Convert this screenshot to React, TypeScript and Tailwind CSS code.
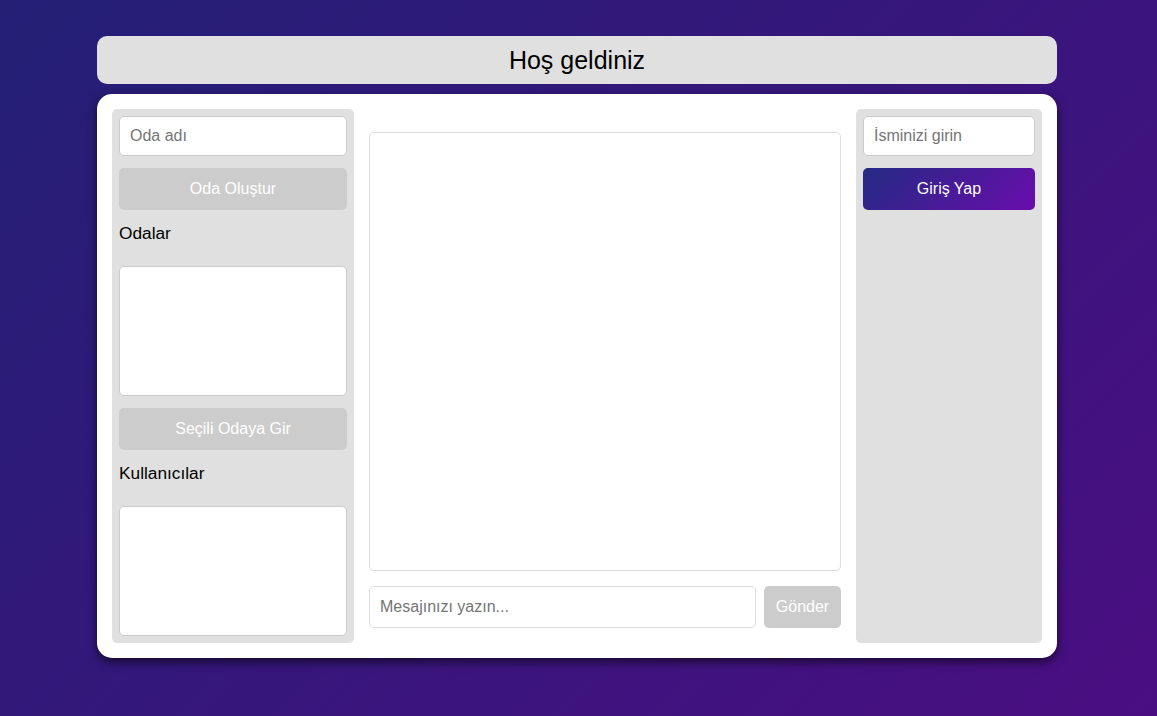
export default function App() {
  const input = "h-10 w-full rounded-[5px] border border-[#cccccc] bg-white px-[10px] text-base text-black outline-none placeholder:text-[#757575]";
  const muted = "h-[42px] w-full rounded-[5px] bg-[#cccccc] text-center text-base text-white";
  const list = "h-[130px] w-full rounded-[5px] border border-[#cccccc] bg-white";
  return (
    <div className="flex h-[716px] w-full flex-col items-center overflow-hidden bg-[linear-gradient(135deg,#231f75,#4a0e82)] pr-[3px] pt-9 font-['Liberation_Sans',Arial,sans-serif] text-black">
      <div className="flex h-12 w-[960px] items-center justify-center rounded-[10px] bg-[#e0e0e0] pt-px text-[25px]">Hoş geldiniz</div>
      <div className="mt-[10px] flex h-[564px] w-[960px] gap-[15px] rounded-[15px] bg-white p-[15px] shadow-[0_4px_10px_rgba(0,0,0,0.6)]">
        <aside className="flex w-[242px] flex-col rounded-[5px] bg-[#e0e0e0] p-[7px]">
          <input className={input} placeholder="Oda adı" />
          <button className={`${muted} mt-3`}>Oda Oluştur</button>
          <div className="mb-6 mt-[14px] h-[18px] text-[17.3px] leading-[18px]">Odalar</div>
          <div className={list} />
          <button className={`${muted} mt-3`}>Seçili Odaya Gir</button>
          <div className="mb-6 mt-[14px] h-[18px] text-[17.3px] leading-[18px]">Kullanıcılar</div>
          <div className={list} />
        </aside>
        <main className="flex flex-1 flex-col pt-[23px]">
          <div className="h-[439px] w-full rounded-[5px] border border-[#dddddd] bg-white" />
          <div className="mt-[15px] flex gap-2">
            <input className="h-[42px] flex-1 rounded-[5px] border border-[#dddddd] bg-white px-[10px] text-base outline-none placeholder:text-[#757575]" placeholder="Mesajınızı yazın..." />
            <button className="h-[42px] w-[77px] rounded-[5px] bg-[#cccccc] text-base text-white">Gönder</button>
          </div>
        </main>
        <aside className="flex w-[186px] flex-col rounded-[5px] bg-[#e0e0e0] p-[7px]">
          <input className={input} placeholder="İsminizi girin" />
          <button className="mt-3 h-[42px] w-full rounded-[5px] bg-[linear-gradient(135deg,#232a82,#6a0dad)] text-base text-white">Giriş Yap</button>
        </aside>
      </div>
    </div>
  );
}
